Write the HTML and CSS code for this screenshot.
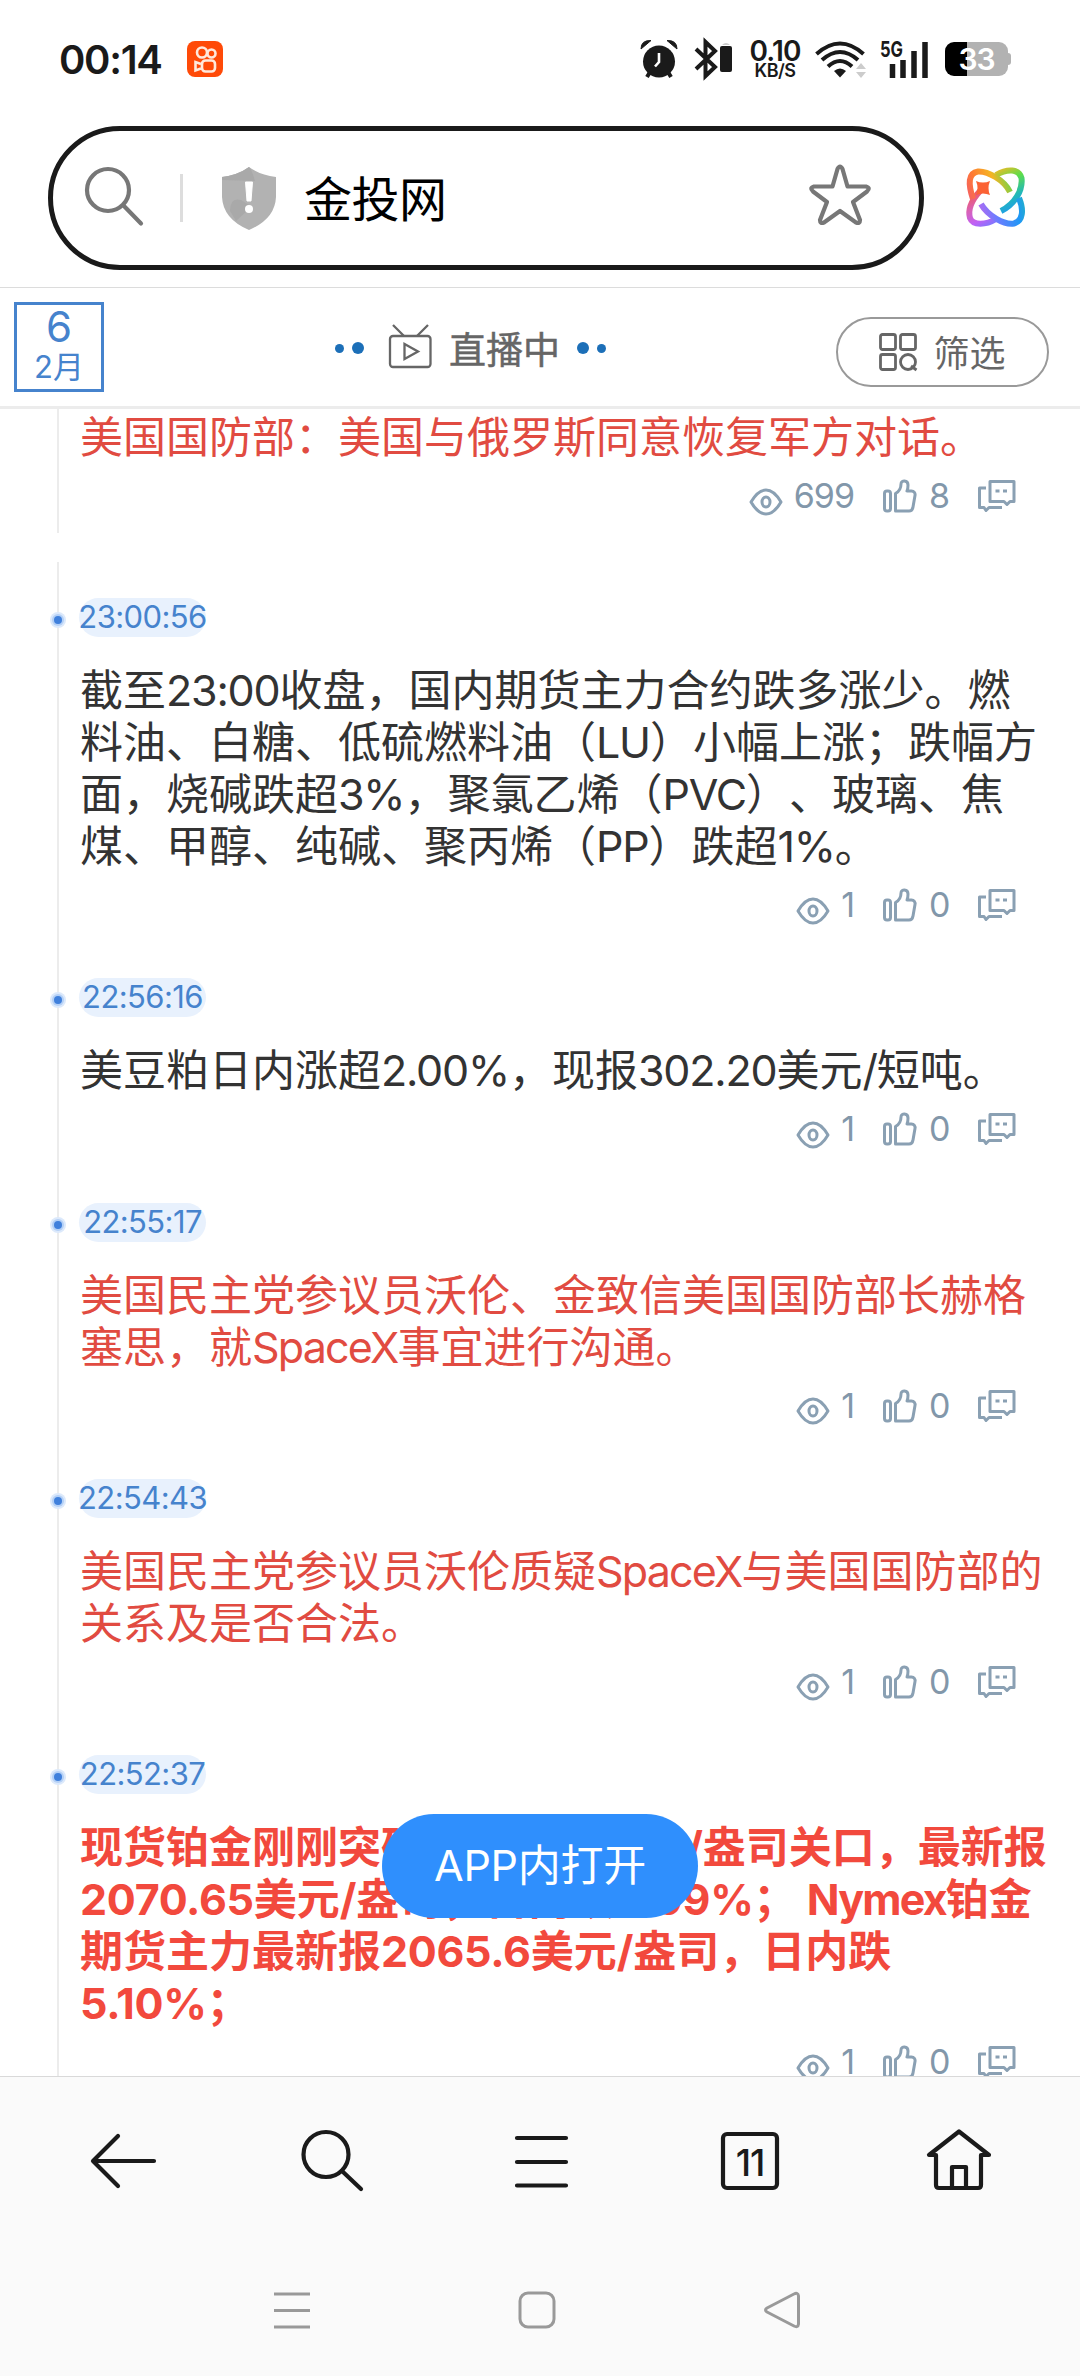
FILE: index.html
```
<!DOCTYPE html>
<html lang="zh">
<head>
    <meta charset="UTF-8">
    <title>金投网</title>
    <link rel="stylesheet" href="styles.css">
</head>
<body>
<svg class="defs">
    <symbol id="eye" viewBox="0 0 34 28">
        <path d="M2 14Q9 2 17 2t15 12Q25 26 17 26T2 14Z"/>
        <ellipse cx="17" cy="14" rx="4" ry="5"/>
    </symbol>
    <symbol id="like" viewBox="0 0 34 34">
        <rect x="1.500" y="12" width="6" height="20" rx="2.500"/>
        <path d="M12.500 32V14.500C17 12 18 9 18 5c0-4 7-4.500 7 1 0 3-.500 5-1 6h4.500c2.500 0 4 2 3.500 4.500L30 28c-.500 3-2 4-4 4Z"/>
    </symbol>
    <symbol id="talk" viewBox="0 0 38 32">
        <path d="M12 1.500h24v20h-4l-3 3-3-3H12Z"/>
        <path d="M8 8H1.500v19.500H6l2 3 3-3h13"/>
        <path d="M19.500 9.500v3M27 9.500v3" stroke-width="4"/>
    </symbol>
</svg>

<div class="status">
    <span class="clock">00:14</span>
    <svg class="kuai" width="36" height="36" viewBox="0 0 36 36">
        <rect width="36" height="36" rx="8" fill="#ff4a08"/>
        <g fill="none" stroke="#ffe9dc" stroke-width="2.600">
            <circle cx="15" cy="11.500" r="5"/>
            <circle cx="24.500" cy="12.500" r="4"/>
            <rect x="15" y="19.500" width="13" height="11" rx="3.500"/>
            <path d="M14 23l-5.500-2v8.500l5.500-2"/>
        </g>
    </svg>
    <svg class="alarm" width="38" height="40" viewBox="0 0 38 40">
        <circle cx="19" cy="22.500" r="16" fill="#1a1a1a"/>
        <path d="M1 10Q1 1 11 1.500L1 10ZM37 10Q37 1 27 1.500L37 10Z" fill="#1a1a1a" stroke="#1a1a1a"/>
        <path d="M10 33l-3 5M28 33l3 5" stroke="#1a1a1a" stroke-width="4"/>
        <path d="M19 14v9l-4 4.500" fill="none" stroke="#fff" stroke-width="2.600"/>
    </svg>
    <svg class="bt" width="38" height="40" viewBox="0 0 38 40">
        <path d="M2 10l19 18-9.500 9V3L21 12 2 30" fill="none" stroke="#1a1a1a" stroke-width="4"/>
        <rect x="26" y="7" width="12" height="26" rx="2" fill="#1a1a1a"/>
        <path d="M28 6q4-4 8 0Z" fill="#ccc"/>
    </svg>
    <div class="speed"><b>0.10</b><i>KB/S</i></div>
    <svg class="wifi" width="52" height="38" viewBox="0 0 52 38">
        <g fill="none" stroke="#1a1a1a" stroke-width="4">
            <path d="M1.500 14Q25 -7 48.500 14"/>
            <path d="M7 20Q25 4 43 20"/>
            <path d="M13 26.500Q25 15.500 37 26.500"/>
        </g>
        <path d="M19 31q6-5 12 0l-6 6.500Z" fill="#1a1a1a"/>
        <path d="M41 29l5-6 5 6ZM41 32l5 6 5-6Z" fill="#ccc"/>
    </svg>
    <svg class="signal" width="49" height="38" viewBox="0 0 49 38">
        <text x="0" y="17" class="net" textLength="23" lengthAdjust="spacingAndGlyphs">5G</text>
        <path d="M12.500 24v14M23 20v18M34 11v27M45 2v36" stroke="#1a1a1a" stroke-width="5.500"/>
    </svg>
    <div class="battery">33</div>
</div>

<div class="top">
    <div class="address">
        <svg class="find" width="58" height="62" viewBox="0 0 58 62" fill="none" stroke="#777" stroke-width="4.200" stroke-linecap="round">
            <circle cx="23" cy="23" r="21"/>
            <path d="M39 39L56 56.500"/>
        </svg>
        <span class="split"></span>
        <svg class="shield" width="54" height="63" viewBox="0 0 54 63">
            <path d="M27 0Q38 8 54 10V30Q53 52 27 63 1 52 0 30V10Q16 8 27 0Z" fill="#b2b2b2"/>
            <path d="M27 0Q16 8 0 10v3L33 14Q30 3 27 0ZM8 44Q8 30 19 33l8 5v4L14 54Z" fill="#a9a9a9"/>
            <path d="M23.500 15h7l-1.500 19h-4Z" fill="#fff" stroke="#fff" stroke-linejoin="round"/>
            <circle cx="27" cy="42" r="4" fill="#fff"/>
        </svg>
        <span class="site">金投网</span>
        <svg class="star" width="62" height="62" viewBox="0 0 62 62">
            <path d="M28.500 6Q31 1 33.500 6L38.500 23.500H57Q62 25 58 28.500L44 39l7 18q0 4-4 2.500L31 48 15 59.500q-4 1.500-4-2.500L18 39 4 28.500Q0 25 5 23.500H23.500Z" fill="none" stroke="#777" stroke-width="4.200" stroke-linejoin="round"/>
        </svg>
    </div>
    <svg class="ai" width="60" height="60" viewBox="0 0 60 60">
        <defs>
            <linearGradient id="g1" gradientUnits="userSpaceOnUse" x1="0" y1="32" x2="47" y2="14">
                <stop offset="0" stop-color="#f25a6e"/>
                <stop offset=".3" stop-color="#ff7a33"/>
                <stop offset=".65" stop-color="#f5b424"/>
                <stop offset="1" stop-color="#5ed84e"/>
            </linearGradient>
            <linearGradient id="g2" gradientUnits="userSpaceOnUse" x1="12" y1="45" x2="60" y2="35">
                <stop offset="0" stop-color="#b56af0"/>
                <stop offset=".35" stop-color="#6d7cff"/>
                <stop offset=".8" stop-color="#1f97f5"/>
                <stop offset="1" stop-color="#22b0c8"/>
            </linearGradient>
            <linearGradient id="g3" gradientUnits="userSpaceOnUse" x1="48" y1="46" x2="28" y2="3">
                <stop offset="0" stop-color="#1f97f5"/>
                <stop offset=".35" stop-color="#22b8b8"/>
                <stop offset=".7" stop-color="#5ddd4a"/>
                <stop offset="1" stop-color="#e8bc28"/>
            </linearGradient>
            <linearGradient id="g4" gradientUnits="userSpaceOnUse" x1="8" y1="20" x2="30" y2="58">
                <stop offset="0" stop-color="#f7584a"/>
                <stop offset=".4" stop-color="#d862b8"/>
                <stop offset=".7" stop-color="#c060f5"/>
                <stop offset="1" stop-color="#6d7cff"/>
            </linearGradient>
        </defs>
        <g fill="none" stroke-width="6">
            <path d="M30 7C42 0 53 1 55.500 10 57 22 49 36 35 43" stroke="url(#g3)"/>
            <path d="M14 23C5 33 2 43 4 50 7 58 20 57 30 51" stroke="url(#g4)"/>
            <path d="M15 36C22 48 38 57 48 55.500 57 53 58 42 53 30" stroke="url(#g2)"/>
            <path d="M44 24C38 12 22 3 12 3.500 2 5 2 16 7 31" stroke="url(#g1)"/>
        </g>
        <path d="M10 13q7 3 14 0-3 7 0 14-7-3-14 0 3-7 0-14Z" fill="#fb6234"/>
    </svg>
</div>

<div class="livebar">
    <div class="date"><b>6</b><span>2月</span></div>
    <div class="live">
        <i class="dot small"></i><i class="dot"></i>
        <svg class="tv" width="43" height="44" viewBox="0 0 43 44" fill="none" stroke="#666" stroke-width="2.300">
            <rect x="1" y="12" width="40.500" height="31" rx="3"/>
            <path d="M4 1l11 11M39 1L28 12M15.500 20v15L29 27.500Z"/>
        </svg>
        <span>直播中</span>
        <i class="dot"></i><i class="dot small"></i>
    </div>
    <div class="filter">
        <svg width="39" height="38" viewBox="0 0 39 38" fill="none" stroke="#666" stroke-width="2.800">
            <rect x="1.500" y="1.500" width="15" height="15" rx="2"/>
            <rect x="21.500" y="1.500" width="15" height="15" rx="2"/>
            <rect x="1.500" y="21.500" width="15" height="15" rx="2"/>
            <circle cx="29" cy="29" r="7.500"/>
            <path d="M32 33l5.500 4"/>
        </svg>
        <span>筛选</span>
    </div>
</div>

<div class="feed">
    <div class="item first">
        <p class="red">美国国防部：美国与俄罗斯同意恢复军方对话。</p>
        <div class="info"><svg class="eye"><use href="#eye"/></svg><span>699</span><svg class="like"><use href="#like"/></svg><span class="n">8</span><svg class="talk"><use href="#talk"/></svg></div>
    </div>
    <div class="list">
        <div class="item">
            <div class="time"><span>23:00:56</span></div>
            <p>截至<em>23:00</em>收盘，国内期货主力合约跌多涨少。燃<br>料油、白糖、低硫燃料油（<em>LU</em>）小幅上涨；跌幅方<br>面，烧碱跌超<em>3%</em>，聚氯乙烯（<em>PVC</em>）、玻璃、焦<br>煤、甲醇、纯碱、聚丙烯（<em>PP</em>）跌超<em>1%</em>。</p>
            <div class="info"><svg class="eye"><use href="#eye"/></svg><span>1</span><svg class="like"><use href="#like"/></svg><span class="n">0</span><svg class="talk"><use href="#talk"/></svg></div>
        </div>
        <div class="item">
            <div class="time"><span>22:56:16</span></div>
            <p>美豆粕日内涨超<em>2.00%</em>，现报<em>302.20</em>美元<em>/</em>短吨。</p>
            <div class="info"><svg class="eye"><use href="#eye"/></svg><span>1</span><svg class="like"><use href="#like"/></svg><span class="n">0</span><svg class="talk"><use href="#talk"/></svg></div>
        </div>
        <div class="item">
            <div class="time"><span>22:55:17</span></div>
            <p class="red">美国民主党参议员沃伦、金致信美国国防部长赫格<br>塞思，就<em class="en">SpaceX</em>事宜进行沟通。</p>
            <div class="info"><svg class="eye"><use href="#eye"/></svg><span>1</span><svg class="like"><use href="#like"/></svg><span class="n">0</span><svg class="talk"><use href="#talk"/></svg></div>
        </div>
        <div class="item">
            <div class="time"><span>22:54:43</span></div>
            <p class="red">美国民主党参议员沃伦质疑<em class="en">SpaceX</em>与美国国防部的<br>关系及是否合法。</p>
            <div class="info"><svg class="eye"><use href="#eye"/></svg><span>1</span><svg class="like"><use href="#like"/></svg><span class="n">0</span><svg class="talk"><use href="#talk"/></svg></div>
        </div>
        <div class="item">
            <div class="time"><span>22:52:37</span></div>
            <p class="red bold">现货铂金刚刚突破<em>2070.00</em>美元<em>/</em>盎司关口，最新报<br><em>2070.65</em>美元<em>/</em>盎司，日内跌<em>4.99%</em>； <em class="en">Nymex</em>铂金<br>期货主力最新报<em>2065.6</em>美元<em>/</em>盎司，日内跌<br><em>5.10%</em>；</p>
            <div class="info"><svg class="eye"><use href="#eye"/></svg><span>1</span><svg class="like"><use href="#like"/></svg><span class="n">0</span><svg class="talk"><use href="#talk"/></svg></div>
        </div>
    </div>
</div>
<a class="open">APP内打开</a>

<div class="bottom">
    <div class="tools">
        <svg width="70" height="66" viewBox="0 0 70 66"><path d="M66 33H6M30 8L5 33 30 58"/></svg>
        <svg width="70" height="66" viewBox="0 0 70 66"><circle cx="29" cy="26.500" r="22.500"/><path d="M45 43L64 61"/></svg>
        <svg width="70" height="66" viewBox="0 0 70 66"><path d="M11 10H60M11 34H60M11 57.500H60"/></svg>
        <svg width="70" height="66" viewBox="0 0 70 66"><rect x="8" y="6" width="54" height="54" rx="4"/><text x="35" y="48" class="num">11</text></svg>
        <svg width="70" height="66" viewBox="0 0 70 66"><path d="M35 3.500L5 27H12V57Q12 60 15 60H54Q57 60 57 57V27H65ZM28 60V39H42V60"/></svg>
    </div>
    <div class="keys">
        <svg width="38" height="38" viewBox="0 0 38 38"><path d="M1 3H37M1 19.500H37M1 36H37"/></svg>
        <svg width="38" height="38" viewBox="0 0 38 38"><rect x="2" y="2" width="34" height="34" rx="8"/></svg>
        <svg width="38" height="38" viewBox="0 0 38 38"><path d="M35.500 5Q35 1 31 3L4 17Q1 19 4 21L31 35Q35 37 35.500 33Z"/></svg>
    </div>
</div>
</body>
</html>
```
FILE: styles.css
```
*{ margin: 0; padding: 0; box-sizing: border-box;}
body { width: 1080px; height: 2376px; overflow: hidden; position: relative; background: #fff;
    display: flex; flex-direction: column;
    font-family: Inter, "Noto Sans CJK SC", sans-serif; color: #333; text-spacing-trim: space-all;}
svg { display: block; flex: none; overflow: visible;}
i, em { font-style: normal;}
.defs { position: absolute; width: 0; height: 0;}

/* 状态栏 */
.status { height: 126px; flex: none; display: flex; align-items: center; padding: 0 72px 8px 59px; color: #1a1a1a;}
.clock { width: 128px; font-size: 40px; font-weight: 600; letter-spacing: -1.3px;}
.kuai { margin-right: auto;}
.bt { margin-left: 16px;}
.speed { width: 54px; margin-left: 16px; text-align: center;}
.speed b, .speed i { display: block; font-weight: 600;}
.speed b { font-size: 28px; line-height: 22px; letter-spacing: -.8px;}
.speed i { font-size: 18px; line-height: 17px; letter-spacing: -.5px;}
.wifi { margin-left: 13px;}
.signal { margin-left: 13px;}
.net { font-size: 22px; font-weight: 700; fill: #1a1a1a;}
.battery { width: 63px; height: 34px; margin-left: 16px; border-radius: 9px; position: relative;
    background: linear-gradient(to right, #000 22px, #b2b2b2 22px);
    color: #fff; font-size: 30px; font-weight: 600; line-height: 35px; text-align: center; letter-spacing: -1px;}
.battery:after { content: ""; position: absolute; right: -3px; top: 11px; width: 4px; height: 12px;
    background: #b2b2b2; border-radius: 0 3px 3px 0;}

/* 地址栏 */
.top { height: 162px; flex: none; display: flex; padding-left: 48px; border-bottom: 1px solid #dcdcdc;}
.address { width: 876px; height: 144px; border: 5px solid #1a1a1a; border-radius: 72px;
    display: flex; align-items: center; padding: 0 48px 0 32px;}
.split { width: 3px; height: 48px; margin: 0 39px 0 37px; background: #ddd;}
.shield { margin-right: 28px;}
.site { padding-top: 3px; font-size: 48px; line-height: 60px; color: #000; letter-spacing: -.5px;}
.star { margin: 0 0 8px auto;}
.ai { margin: 42px 0 0 42px;}

/* 直播栏 */
.livebar { height: 121px; flex: none; display: flex; border-bottom: 3px solid #ececec;}
.date { width: 90px; height: 90px; margin: 14px 0 0 14px; border: 3px solid #4683cd; color: #4683cd;
    display: flex; flex-direction: column; align-items: center;}
.date b { font-size: 42px; font-weight: 400; line-height: 44px;}
.date span { font-size: 31px; line-height: 36px;}
.live { width: 271px; height: 120px; margin-left: 231px; display: flex; align-items: center; color: #666; font-size: 37px;}
.live .tv { margin: 0 17px 5px 25px;}
.dot { width: 12px; height: 12px; border-radius: 50%; background: #1c6fb8;}
.small { width: 9px; height: 9px;}
.dot + .dot { margin-left: 8px;}
.live span { margin-right: 17px; -webkit-text-stroke: .5px #666;}
.filter { width: 213px; height: 70px; margin: 29px 0 0 230px; border: 2px solid #999; border-radius: 35px;
    display: flex; align-items: center; justify-content: center; color: #666; font-size: 36px;}
.filter span { margin: 0 0 2px 15px;}

/* 快讯列表 */
.feed { height: 1667px; flex: none; overflow: hidden;}
.item { padding-left: 80px;}
.first { height: 124px; margin-bottom: 29px;}
.first p { margin: 0; padding-top: 2px;}
.first, .list { background: linear-gradient(#ececec, #ececec) 57px 0 / 2px 100% no-repeat;}
.list { padding-top: 36px;}
.time { width: 127px; height: 39px; margin-left: -1px; border-radius: 20px; background: #e8f1fd;
    color: #4683cd; font-size: 31px; line-height: 37px; letter-spacing: -.6px; position: relative;
    display: flex; justify-content: center; white-space: nowrap;}
/* 时间轴圆点 */
.time:before { content: ""; position: absolute; left: -25px; top: 18px; width: 8px; height: 8px; border-radius: 50%;
    background: #4080dc; box-shadow: 0 0 0 2px #b4d0f6, 0 0 0 4px #dce9fb;}
p { margin-top: 27px; font-size: 43px; line-height: 52px; white-space: nowrap;}
p em { letter-spacing: -1.2px;}
p .en { letter-spacing: -1.8px;}
.red { color: #e14b41;}
.bold { color: #f2493d; font-weight: 700;}
.bold em { letter-spacing: -.3px;}
.bold .en { letter-spacing: -1.8px;}
.info { height: 34px; margin: 16px 64px 56.300px 0; display: flex; justify-content: flex-end; align-items: center;
    color: #8297aa; font-size: 34px; line-height: 34px; letter-spacing: -1px;}
.info svg { fill: none; stroke: #8aa0b3; stroke-width: 3; stroke-linejoin: round;}
.info .eye { width: 34px; height: 28px; margin: 11px 11px 0 0;}
.info .like { width: 34px; height: 34px; margin-left: 29px;}
.info .n { width: 20px; margin: 0 29px 0 12px;}
.info .talk { width: 38px; height: 32px;}
.open { position: absolute; left: 382px; top: 1814px; width: 316px; height: 104px; border-radius: 52px;
    background: #2f8ffd; color: #fff; font-size: 43px; line-height: 102px; text-align: center; letter-spacing: -.3px;}

/* 底部导航 */
.bottom { flex: 1; background: #fafafa; border-top: 1px solid #d9d9d9;}
.tools { display: flex; justify-content: space-between; padding: 51px 86px 0 88px;}
.tools svg { fill: none; stroke: #1a1a1a; stroke-width: 4.200; stroke-linecap: round; stroke-linejoin: round;}
.tools .num { font-size: 37px; font-weight: 500; text-anchor: middle; fill: #1a1a1a; stroke: none; letter-spacing: -1px;}
.keys { display: flex; justify-content: space-between; padding: 97px 279px 0 273px;}
.keys svg { fill: none; stroke: #999; stroke-width: 3; stroke-linejoin: round;}
```
